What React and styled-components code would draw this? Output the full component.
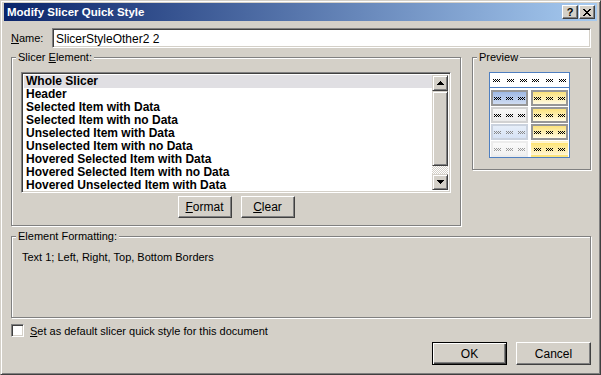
import React from 'react'
import styled, { createGlobalStyle } from 'styled-components'

const GlobalStyle = createGlobalStyle`
  body {
    margin: 0;
    background: #d4d0c8;
  }
  * {
    box-sizing: border-box;
  }
`

const FACE = '#d4d0c8'

const Window = styled.div`
  width: 601px;
  height: 375px;
  background: ${FACE};
  border: 1px solid;
  border-color: ${FACE} #404040 #404040 ${FACE};
  box-shadow: inset 1px 1px #fff, inset -1px -1px #808080;
  padding: 2px 3px 0 3px;
  font-family: "Liberation Sans", Arial, sans-serif;
  font-size: 11px;
  color: #000;
  display: flex;
  flex-direction: column;
`

const TitleBar = styled.div`
  height: 18px;
  background: linear-gradient(to right, #0a246a, #a6caf0);
  display: flex;
  align-items: center;
  justify-content: space-between;
  padding: 0 2px 0 3px;
`

const TitleText = styled.span`
  color: #fff;
  font-weight: bold;
  font-size: 11.5px;
`

const CaptionButtons = styled.div`
  display: flex;
  gap: 1px;
`

const CaptionButton = styled.div`
  width: 16px;
  height: 14px;
  background: ${FACE};
  border: 1px solid;
  border-color: #fff #404040 #404040 #fff;
  box-shadow: inset -1px -1px #808080;
  display: flex;
  align-items: center;
  justify-content: center;
  font-weight: bold;
  font-size: 11px;
  line-height: 1;
`

const Body = styled.div`
  flex: 1;
  display: flex;
  flex-direction: column;
  padding: 7px 6px 0 7px;
`

const NameRow = styled.div`
  display: flex;
  align-items: center;
  height: 20px;
`

const Label = styled.label`
  width: ${({ $w }) => $w || 'auto'};
  white-space: nowrap;
`

const Sunken = styled.div`
  background: #fff;
  border: 1px solid;
  border-color: #808080 #fff #fff #808080;
  box-shadow: inset 1px 1px #404040, inset -1px -1px ${FACE};
`

const TextInput = styled(Sunken)`
  flex: 1;
  height: 20px;
  padding: 3px 0 0 3px;
  font-size: 12px;
`

const MainRow = styled.div`
  display: flex;
  align-items: flex-start;
  gap: 11px;
  margin-top: 9px;
`

const Group = styled.div`
  position: relative;
  width: ${({ $w }) => $w};
  height: ${({ $h }) => $h || 'auto'};
  border: 1px solid #808080;
  box-shadow: 1px 1px 0 #fff, inset 1px 1px 0 #fff;
  padding: ${({ $pad }) => $pad};
  margin-top: ${({ $mt }) => $mt || '0'};
`

const Caption = styled.span`
  position: absolute;
  top: -7px;
  left: 4px;
  padding: 0 2px;
  line-height: 13px;
  background: ${FACE};
  white-space: nowrap;
`

const ListBox = styled(Sunken)`
  height: 121px;
  display: flex;
  padding: 2px;
`

const Items = styled.div`
  flex: 1;
  display: flex;
  flex-direction: column;
`

const Item = styled.div`
  height: 13px;
  line-height: 13px;
  padding-left: 2px;
  font-weight: bold;
  font-size: 12px;
  background: ${({ $active }) => ($active ? '#e0dfe3' : 'transparent')};
  white-space: nowrap;
`

const ScrollBar = styled.div`
  width: 16px;
  display: flex;
  flex-direction: column;
`

const Raised = styled.div`
  background: ${FACE};
  border: 1px solid;
  border-color: ${FACE} #404040 #404040 ${FACE};
  box-shadow: inset 1px 1px #fff, inset -1px -1px #808080;
`

const ArrowButton = styled(Raised)`
  height: 16px;
  display: flex;
  align-items: center;
  justify-content: center;
`

const Thumb = styled(Raised)`
  height: 75px;
`

const Track = styled.div`
  flex: 1;
  background-color: #fff;
  background-image: repeating-conic-gradient(${FACE} 0 25%, #fff 0 50%);
  background-size: 2px 2px;
`

const ButtonRow = styled.div`
  display: flex;
  justify-content: ${({ $justify }) => $justify};
  gap: 9px;
  margin-top: ${({ $mt }) => $mt};
`

const PushButton = styled.button`
  width: ${({ $w }) => $w};
  height: ${({ $h }) => $h};
  padding: 0;
  font-family: inherit;
  font-size: 12px;
  color: #000;
  background: ${FACE};
  border: 1px solid;
  border-color: #fff #404040 #404040 #fff;
  box-shadow: ${({ $default }) =>
    $default
      ? 'inset 1px 1px #fff, inset -1px -1px #404040, inset -2px -2px #808080'
      : 'inset -1px -1px #808080, inset 1px 1px ' + FACE};
  ${({ $default }) => ($default ? 'border-color: #000;' : '')}
`

const PreviewBox = styled.div`
  width: 81px;
  height: 86px;
  background: #fff;
  border: 1px solid #4f7fc0;
  display: flex;
  flex-direction: column;
`

const PreviewHeader = styled.div`
  height: 16px;
  display: grid;
  grid-template-columns: 1fr 1fr;
  column-gap: 3px;
  padding: 0 2px;
  border-bottom: 1px solid #4f7fc0;
`

const PreviewGrid = styled.div`
  display: grid;
  grid-template-columns: 37px 37px;
  grid-auto-rows: 16px;
  gap: 1px 3px;
  padding: 2px 1px 0 1px;
`

const cellStyles = {
  selected: { bg: 'linear-gradient(#9fb9e4, #cfdcf2)', border: '2px solid #979797' },
  plain: { bg: 'linear-gradient(#f6f6f6, #ebebeb)', border: '2px solid #d2d2d2' },
  hoverSel: { bg: 'linear-gradient(#e6eef9, #d7e3f5)', border: '2px solid #cad2de' },
  hoverNo: { bg: 'linear-gradient(#fafafa, #f1f1f1)', border: '2px solid #ececec' },
  yellow: { bg: 'linear-gradient(#fbe27c, #fffae2)', border: '2px solid #979797' },
  yellowFlat: { bg: 'linear-gradient(#fde474, #fff6d6)', border: '2px solid transparent' },
}

const Cell = styled.div`
  background: ${({ $kind }) => cellStyles[$kind].bg};
  border: ${({ $kind }) => cellStyles[$kind].border};
  display: flex;
  align-items: center;
  justify-content: space-between;
  padding: 0 1px;
`

const SquiggleGroup = styled.div`
  display: flex;
  align-items: center;
  justify-content: space-between;
  padding: 0 1px;
`

const CheckRow = styled.div`
  display: flex;
  align-items: center;
  gap: 6px;
  margin-top: 6px;
`

const CheckBox = styled(Sunken)`
  width: 13px;
  height: 13px;
`

const Squiggle = ({ color = '#000' }) => {
  const cells = []
  for (let y = 0; y < 3; y++) {
    for (let x = 0; x < 7; x++) {
      if ((x + y) % 2 === 0) cells.push(<rect key={x + '-' + y} x={x} y={y} width="1" height="1" fill={color} />)
    }
  }
  return (
    <svg width="7" height="3" viewBox="0 0 7 3" shapeRendering="crispEdges">
      {cells}
    </svg>
  )
}

const Triangle = ({ down }) => (
  <svg width="7" height="4" viewBox="0 0 7 4" shapeRendering="crispEdges">
    <path d={down ? 'M0 0H7L3.5 4Z' : 'M0 4H7L3.5 0Z'} fill="#000" />
  </svg>
)

const Triple = ({ color }) => (
  <>
    <Squiggle color={color} />
    <Squiggle color={color} />
    <Squiggle color={color} />
  </>
)

const elements = [
  'Whole Slicer',
  'Header',
  'Selected Item with Data',
  'Selected Item with no Data',
  'Unselected Item with Data',
  'Unselected Item with no Data',
  'Hovered Selected Item with Data',
  'Hovered Selected Item with no Data',
  'Hovered Unselected Item with Data',
]

const previewRows = [
  ['selected', '#000', 'yellow'],
  ['plain', '#000', 'yellow'],
  ['hoverSel', '#8a8a8a', 'yellow'],
  ['hoverNo', '#9a9a9a', 'yellowFlat'],
]

export default function App() {
  return (
    <>
      <GlobalStyle />
      <Window>
        <TitleBar>
          <TitleText>Modify Slicer Quick Style</TitleText>
          <CaptionButtons>
            <CaptionButton>?</CaptionButton>
            <CaptionButton>
              <svg width="8" height="7" viewBox="0 0 8 7" shapeRendering="crispEdges">
                <path d="M0 0h2l2 2.5L6 0h2L5 3.5 8 7H6L4 4.5 2 7H0l3-3.5Z" fill="#000" />
              </svg>
            </CaptionButton>
          </CaptionButtons>
        </TitleBar>

        <Body>
          <NameRow>
            <Label $w="41px"><u>N</u>ame:</Label>
            <TextInput>SlicerStyleOther2 2</TextInput>
          </NameRow>

          <MainRow>
            <Group $w="450px" $pad="14px 9px 7px 9px">
              <Caption>Slicer <u>E</u>lement:</Caption>
              <ListBox>
                <Items>
                  {elements.map((e, i) => (
                    <Item key={e} $active={i === 0}>{e}</Item>
                  ))}
                </Items>
                <ScrollBar>
                  <ArrowButton><Triangle /></ArrowButton>
                  <Thumb />
                  <Track />
                  <ArrowButton><Triangle down /></ArrowButton>
                </ScrollBar>
              </ListBox>
              <ButtonRow $justify="center" $mt="3px">
                <PushButton $w="54px" $h="22px"><u>F</u>ormat</PushButton>
                <PushButton $w="54px" $h="22px"><u>C</u>lear</PushButton>
              </ButtonRow>
            </Group>

            <Group $w="119px" $h="113px" $pad="14px 0 0 16px">
              <Caption>Preview</Caption>
              <PreviewBox>
                <PreviewHeader>
                  <SquiggleGroup><Triple /></SquiggleGroup>
                  <SquiggleGroup><Triple /></SquiggleGroup>
                </PreviewHeader>
                <PreviewGrid>
                  {previewRows.map(([left, color, right], i) => (
                    <React.Fragment key={i}>
                      <Cell $kind={left}><Triple color={color} /></Cell>
                      <Cell $kind={right}><Triple /></Cell>
                    </React.Fragment>
                  ))}
                </PreviewGrid>
              </PreviewBox>
            </Group>
          </MainRow>

          <Group $w="580px" $h="82px" $pad="14px 10px" $mt="10px">
            <Caption>Element Formatting:</Caption>
            Text 1; Left, Right, Top, Bottom Borders
          </Group>

          <CheckRow>
            <CheckBox />
            <Label><u>S</u>et as default slicer quick style for this document</Label>
          </CheckRow>

          <ButtonRow $justify="flex-end" $mt="5px">
            <PushButton $w="75px" $h="23px" $default>OK</PushButton>
            <PushButton $w="75px" $h="23px">Cancel</PushButton>
          </ButtonRow>
        </Body>
      </Window>
    </>
  )
}
